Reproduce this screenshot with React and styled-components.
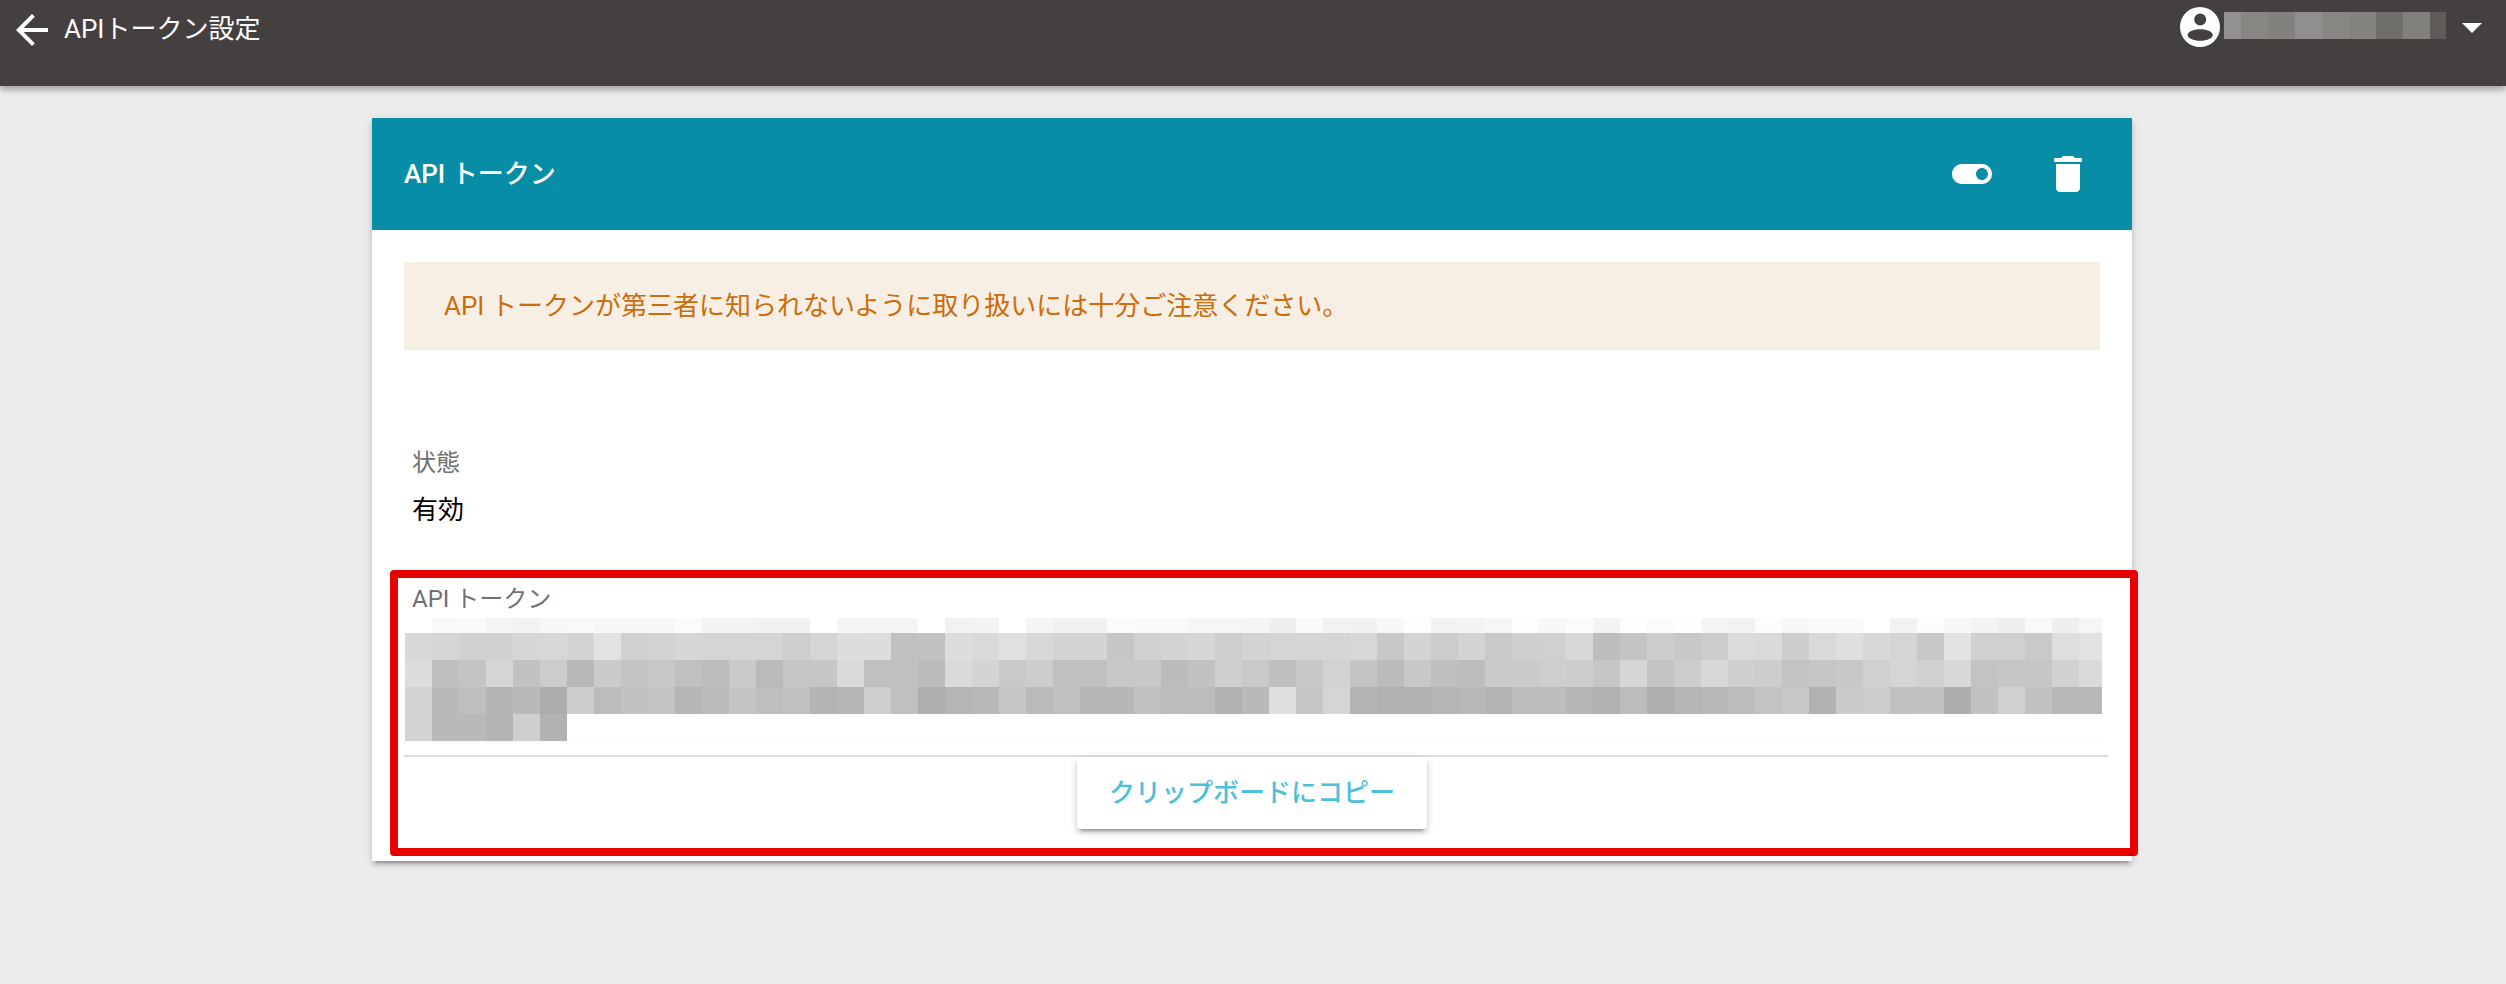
import React from 'react';
import styled, { createGlobalStyle } from 'styled-components';

const FONT = `Roboto, "Noto Sans CJK JP", sans-serif`;

const GlobalStyle = createGlobalStyle`
  html, body {
    margin: 0;
    padding: 0;
    background: #ececec;
    font-family: ${FONT};
  }
`;

// #region styles
const Page = styled.div`
  min-height: 984px;
  background: #ececec;
`;

const TopBar = styled.header`
  display: flex;
  justify-content: space-between;
  align-items: flex-start;
  height: 86px;
  padding: 0 10px 0 8px;
  box-sizing: border-box;
  background: #444040;
  color: #fff;
  box-shadow: 0 4px 6px rgba(0, 0, 0, 0.3);
`;

const TitleGroup = styled.div`
  display: flex;
  align-items: center;
  gap: 8px;
  height: 60px;
`;

const PageTitle = styled.h1`
  margin: 0;
  font-size: 26px;
  font-weight: 400;
  line-height: 58px;
  height: 60px;
`;

const UserMenu = styled.div`
  display: flex;
  align-items: flex-start;
  padding-top: 3px;
`;

const BlurStrip = styled.div`
  display: flex;
  height: 27px;
  margin: 9px 2px 0 0;
`;

const BlurCell = styled.div`
  width: ${props => props.$w}px;
`;

const Icon = styled.svg`
  display: block;
  flex: none;
  width: 48px;
  height: 48px;
  fill: currentColor;
`;

const Main = styled.main`
  display: flex;
  justify-content: center;
  padding: 32px 2px 0 0;
`;

const Card = styled.section`
  position: relative;
  width: 1760px;
  background: #fff;
  box-shadow: 0 4px 4px rgba(0, 0, 0, 0.14), 0 6px 2px -4px rgba(0, 0, 0, 0.2),
    0 2px 10px rgba(0, 0, 0, 0.12);
`;

const CardHeader = styled.div`
  display: flex;
  justify-content: space-between;
  align-items: center;
  height: 112px;
  padding: 0 16px 0 32px;
  background: #078ea6;
  color: #fff;
`;

const CardTitle = styled.h2`
  margin: 0;
  font-size: 26px;
  font-weight: 500;
  line-height: 32px;
`;

const HeaderActions = styled.div`
  display: flex;
`;

const IconButton = styled.button`
  display: flex;
  justify-content: center;
  align-items: center;
  width: 96px;
  height: 96px;
  padding: 0;
  border: none;
  background: none;
  color: inherit;
  cursor: pointer;
`;

const CardBody = styled.div`
  padding: 32px;
`;

const Notice = styled.div`
  height: 88px;
  padding: 0 40px;
  box-sizing: border-box;
  background: #f7efe3;
  color: #cc6c0c;
  font-size: 26px;
  line-height: 88px;
`;

const Field = styled.div`
  margin-top: ${props => props.$top}px;
`;

const FieldLabel = styled.div`
  padding-left: 8px;
  color: #707070;
  font-size: 24px;
  line-height: 32px;
`;

const FieldValue = styled.div`
  margin-top: 15px;
  padding-left: 8px;
  color: #000;
  font-size: 26px;
  line-height: 32px;
`;

const TokenBlur = styled.div`
  width: 1697px;
  margin: 3px 0 13px 1px;
  overflow: hidden;
  border-bottom: 1px solid #fafafa;
`;

const TokenRow = styled.div`
  display: flex;
  height: ${props => props.$h}px;
`;

const TokenCell = styled.div`
  flex: none;
  width: 27px;
`;

const Divider = styled.hr`
  height: 2px;
  margin: 0 -8px 0 0;
  border: none;
  background: #dedede;
`;

const ButtonRow = styled.div`
  display: flex;
  justify-content: center;
`;

const CopyButton = styled.button`
  width: 350px;
  height: 72px;
  padding: 0 0 5px;
  border: none;
  border-radius: 4px;
  background: #fff;
  color: #4dc0dc;
  font-family: inherit;
  font-size: 26px;
  font-weight: 500;
  cursor: pointer;
  box-shadow: 0 4px 4px rgba(0, 0, 0, 0.14), 0 6px 2px -4px rgba(0, 0, 0, 0.2),
    0 2px 10px rgba(0, 0, 0, 0.12);
`;

// annotation drawn over the token section
const Highlight = styled.div`
  position: absolute;
  left: 18px;
  top: 452px;
  width: 1748px;
  height: 286px;
  box-sizing: border-box;
  border: 8px solid #e60000;
  border-radius: 4px;
  pointer-events: none;
`;
// #endregion

const USER_BLUR = [
  [17, '#939090'],
  [27, '#878683'],
  [27, '#82817e'],
  [27, '#908e8e'],
  [27, '#878683'],
  [27, '#848380'],
  [27, '#6f6e6b'],
  [27, '#807f7c'],
  [16, '#5f5b59']
];

const TOKEN_ROWS = [
  {
    h: 15,
    cells:
      'ff f9 fa f4 f2 f8 f9 f7 f7 f7 fb f3 f3 f1 f1 ff f5 f4 f4 ff f2 f3 ff f5 f1 f1 fb fa fa f6 f6 f5 ef fa f2 f1 f8 fd f2 f3 f6 fd f8 fb f3 fd fb fe f5 f2 fc f8 fa fa ff f2 fc f8 f3 ef f9 ef f6'
  },
  {
    h: 27,
    cells:
      'd8 d6 d1 d1 d6 d7 d4 e2 d0 d2 d6 d5 d5 d5 ce d5 dd dd c0 c2 dd d9 e0 d8 d4 d4 c6 d0 d4 d6 ce d3 d5 d6 d5 d7 c8 d4 cc d3 c9 cf d0 d8 bd c4 cd c8 cc db da cd d9 df d8 d5 c8 e3 d0 d0 c9 df e2'
  },
  {
    h: 27,
    cells:
      'dd bf c4 d6 c2 cc b8 cb c4 c8 c0 bc ca ba c6 c6 da c0 c0 bb da d4 c9 cd c0 c0 c8 c8 bb c2 cf c9 bf c8 d2 c4 bb c8 bf bd ca cb ce cc c6 d6 c4 cd d8 cf cd c3 c6 c8 d0 d5 d0 d8 c3 c6 c6 d1 da'
  },
  {
    h: 27,
    cells:
      'd3 b9 be b4 b9 ad cd bc c2 c4 b6 ba c4 be c0 b4 b6 cf c0 af b5 b8 c6 ba c0 b7 b7 c1 bc bd b2 b9 df c6 d5 b3 b1 b1 b5 b8 b3 bd bd b6 b1 bc af b6 b8 bd c3 c7 b2 cb cc c1 c2 ae c2 d0 c1 b8 b8'
  },
  { h: 27, cells: 'd3 b9 b9 b4 cf b2' }
];

const ArrowBack = () => (
  <Icon viewBox="0 0 24 24">
    <path d="M20 11H7.83l5.59-5.59L12 4l-8 8 8 8 1.41-1.41L7.83 13H20v-2z" />
  </Icon>
);

const AccountCircle = () => (
  <Icon viewBox="0 0 24 24">
    <path
      fillRule="evenodd"
      d="M12 2a10 10 0 1 0 0 20 10 10 0 0 0 0-20zM12.1 5.2a3 3 0 1 1 0 6 3 3 0 0 1 0-6zM12.1 13.1c3.5 0 6.3 1.3 6.3 2.9s-2.8 2.9-6.3 2.9-6.3-1.3-6.3-2.9 2.8-2.9 6.3-2.9z"
    />
  </Icon>
);

const ArrowDropDown = () => (
  <Icon viewBox="0 0 24 24">
    <path d="M7 10l5 5 5-5z" />
  </Icon>
);

const ToggleOn = () => (
  <Icon viewBox="0 0 24 24">
    <path d="M17 7H7c-2.76 0-5 2.24-5 5s2.24 5 5 5h10c2.76 0 5-2.24 5-5s-2.24-5-5-5zm0 8c-1.66 0-3-1.34-3-3s1.34-3 3-3 3 1.34 3 3-1.34 3-3 3z" />
  </Icon>
);

const Trash = () => (
  <Icon viewBox="0 0 24 24">
    <path d="M6 19c0 1.1.9 2 2 2h8c1.1 0 2-.9 2-2V7H6v12zM19 4h-3.5l-1-1h-5l-1 1H5v2h14V4z" />
  </Icon>
);

const App = () => (
  <Page>
    <GlobalStyle />
    <TopBar>
      <TitleGroup>
        <ArrowBack />
        <PageTitle>APIトークン設定</PageTitle>
      </TitleGroup>
      <UserMenu>
        <AccountCircle />
        <BlurStrip>
          {USER_BLUR.map(([w, color], i) => (
            <BlurCell key={i} $w={w} style={{ background: color }} />
          ))}
        </BlurStrip>
        <ArrowDropDown />
      </UserMenu>
    </TopBar>

    <Main>
      <Card>
        <CardHeader>
          <CardTitle>API トークン</CardTitle>
          <HeaderActions>
            <IconButton aria-label="toggle">
              <ToggleOn />
            </IconButton>
            <IconButton aria-label="delete">
              <Trash />
            </IconButton>
          </HeaderActions>
        </CardHeader>

        <CardBody>
          <Notice>
            API トークンが第三者に知られないように取り扱いには十分ご注意ください。
          </Notice>

          <Field $top={97}>
            <FieldLabel>状態</FieldLabel>
            <FieldValue>有効</FieldValue>
          </Field>

          <Field $top={57}>
            <FieldLabel>API トークン</FieldLabel>
            <TokenBlur>
              {TOKEN_ROWS.map((row, r) => (
                <TokenRow key={r} $h={row.h}>
                  {row.cells.split(' ').map((g, c) => (
                    <TokenCell key={c} style={{ background: `#${g}${g}${g}` }} />
                  ))}
                </TokenRow>
              ))}
            </TokenBlur>
            <Divider />
            <ButtonRow>
              <CopyButton>クリップボードにコピー</CopyButton>
            </ButtonRow>
          </Field>
        </CardBody>

        <Highlight />
      </Card>
    </Main>
  </Page>
);

export default App;
